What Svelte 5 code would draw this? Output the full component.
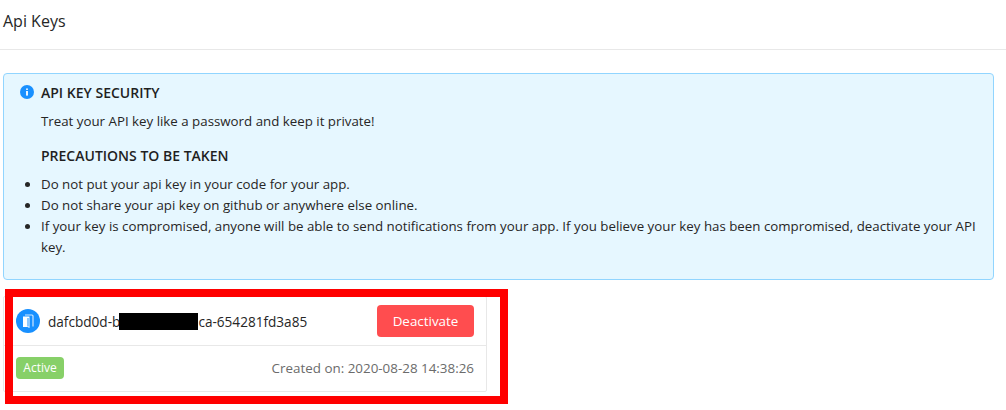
<script>
  const tips = [
    "Do not put your api key in your code for your app.",
    "Do not share your api key on github or anywhere else online.",
    "If your key is compromised, anyone will be able to send notifications from your app. If you believe your key has been compromised, deactivate your API key.",
  ];
</script>

<div class="page">
  <header class="page__head">Api Keys</header>

  <section class="alert">
    <div class="alert__title">
      <svg class="alert__icon" viewBox="0 0 14 14" width="14" height="14">
        <circle cx="7" cy="7" r="7" fill="#1890ff" />
        <rect x="6.1" y="6" width="1.8" height="4.6" fill="#fff" />
        <rect x="6.1" y="3.3" width="1.8" height="1.8" rx="0.9" fill="#fff" />
      </svg>
      <strong>API KEY SECURITY</strong>
    </div>
    <p class="alert__text">Treat your API key like a password and keep it private!</p>
    <strong class="alert__sub">PRECAUTIONS TO BE TAKEN</strong>
    <ul>
      {#each tips as tip}
        <li>{tip}</li>
      {/each}
    </ul>
  </section>

  <div class="card">
    <div class="card__top">
      <span class="avatar">
        <svg viewBox="0 0 24 24" width="24" height="24">
          <path d="M9 6h7a1 1 0 0 1 1 1v10.500" fill="none" stroke="#cfe7ff" stroke-width="1.2" />
          <path d="M7 7.500h6.500v11.500l-2 -1h-4.500z" fill="#fff" />
          <path d="M12 9v8.500" stroke="#1890ff" stroke-width="1" />
        </svg>
      </span>
      <span class="key">dafcbd0d-b<span class="redact"></span>ca-654281fd3a85</span>
      <button class="deactivate">Deactivate</button>
    </div>
    <div class="card__bottom">
      <span class="tag">Active</span>
      <span class="created">Created on: 2020-08-28 14:38:26</span>
    </div>
  </div>

  <div class="highlight"></div>
</div>

<style>
  :global(body) {
    margin: 0;
    background: #fff;
  }
  .page {
    position: relative;
    width: 1006px;
    height: 410px;
    overflow: hidden;
    font-family: "Open Sans", "Noto Sans", sans-serif;
    font-size: 13.3px;
    color: #262626;
  }
  .page__head {
    height: 49px;
    line-height: 42px;
    padding-left: 3px;
    font-size: 16px;
    border-bottom: 1px solid #e8e8e8;
  }
  .alert {
    box-sizing: border-box;
    margin: 23px 12px 0 3px;
    height: 207px;
    padding: 8px 15px 0 15px;
    background: #e6f7ff;
    border: 1px solid #91d5ff;
    border-radius: 4px;
  }
  .alert__title {
    display: flex;
    align-items: center;
    gap: 7px;
    height: 20px;
    margin-left: 1px;
  }
  .alert__title strong, .alert__sub {
    font-weight: 600;
    font-size: 14px;
    color: #1f1f1f;
  }
  .alert__icon { flex-shrink: 0; }
  .alert__text {
    margin: 9px 0 0 22px;
    line-height: 20px;
  }
  .alert__sub {
    display: block;
    margin: 15px 0 0 22px;
    line-height: 20px;
  }
  ul {
    margin: 8px 0 0 0;
    padding: 0 0 0 8px;
    list-style-position: outside;
  }
  li {
    line-height: 21px;
    margin-left: 14px;
  }
  .card {
    box-sizing: border-box;
    width: 484px;
    margin: 16px 0 0 3px;
    height: 96px;
    border: 1px solid #e8e8e8;
    border-radius: 2px;
  }
  .card__top {
    display: flex;
    align-items: center;
    height: 48px;
    padding: 0 12px;
    border-bottom: 1px solid #e8e8e8;
  }
  .avatar {
    display: flex;
    align-items: center;
    justify-content: center;
    width: 24px;
    height: 24px;
    border-radius: 50%;
    background: #1890ff;
    flex-shrink: 0;
  }
  .key {
    margin-left: 8px;
    white-space: nowrap;
    font-size: 13.6px;
  }
  .redact {
    display: inline-block;
    width: 79px;
    height: 17px;
    margin-left: -1px;
    vertical-align: -3px;
    background: #000;
  }
  .deactivate {
    margin-left: auto;
    width: 97px;
    height: 32px;
    border: none;
    border-radius: 4px;
    background: #ff4d4f;
    color: #fff;
    font: inherit;
    font-size: 13.4px;
    padding: 0;
  }
  .card__bottom {
    display: flex;
    align-items: center;
    justify-content: space-between;
    height: 44px;
    padding: 0 12px;
  }
  .tag {
    width: 48px;
    height: 22px;
    line-height: 22px;
    text-align: center;
    border-radius: 4px;
    background: #87d068;
    color: #fff;
    font-size: 12px;
  }
  .created {
    color: #6b6b6b;
    font-size: 13.4px;
  }
  .highlight {
    position: absolute;
    left: 5px;
    top: 289px;
    box-sizing: border-box;
    width: 503px;
    height: 115px;
    border: 8px solid #f00;
    pointer-events: none;
  }
</style>
